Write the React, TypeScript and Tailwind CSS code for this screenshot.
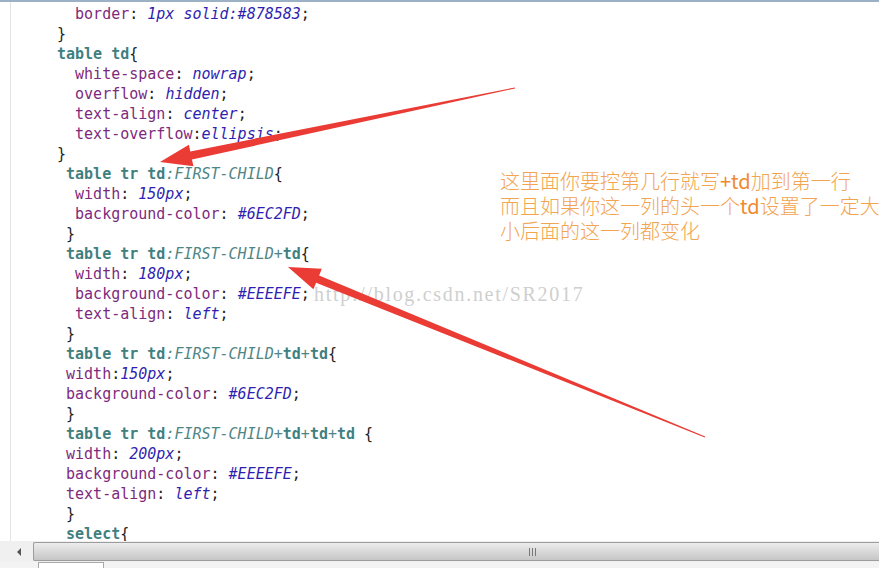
import React from "react";

type Tok = [string, string];

// s = selector, p = pseudo, k = property, v = value, t = plain
const LINES: Tok[][] = [
  [["t", "  "], ["k", "border"], ["t", ": "], ["v", "1px solid:#878583"], ["t", ";"]],
  [["t", "}"]],
  [["s", "table td"], ["t", "{"]],
  [["t", "  "], ["k", "white-space"], ["t", ": "], ["v", "nowrap"], ["t", ";"]],
  [["t", "  "], ["k", "overflow"], ["t", ": "], ["v", "hidden"], ["t", ";"]],
  [["t", "  "], ["k", "text-align"], ["t", ": "], ["v", "center"], ["t", ";"]],
  [["t", "  "], ["k", "text-overflow"], ["t", ":"], ["v", "ellipsis"], ["t", ";"]],
  [["t", "}"]],
  [["t", " "], ["s", "table tr td"], ["p", ":FIRST-CHILD"], ["t", "{"]],
  [["t", "  "], ["k", "width"], ["t", ": "], ["v", "150px"], ["t", ";"]],
  [["t", "  "], ["k", "background-color"], ["t", ": "], ["v", "#6EC2FD"], ["t", ";"]],
  [["t", " }"]],
  [["t", " "], ["s", "table tr td"], ["p", ":FIRST-CHILD+"], ["s", "td"], ["t", "{"]],
  [["t", "  "], ["k", "width"], ["t", ": "], ["v", "180px"], ["t", ";"]],
  [["t", "  "], ["k", "background-color"], ["t", ": "], ["v", "#EEEEFE"], ["t", ";"]],
  [["t", "  "], ["k", "text-align"], ["t", ": "], ["v", "left"], ["t", ";"]],
  [["t", " }"]],
  [["t", " "], ["s", "table tr td"], ["p", ":FIRST-CHILD+"], ["s", "td"], ["p", "+"], ["s", "td"], ["t", "{"]],
  [["t", " "], ["k", "width"], ["t", ":"], ["v", "150px"], ["t", ";"]],
  [["t", " "], ["k", "background-color"], ["t", ": "], ["v", "#6EC2FD"], ["t", ";"]],
  [["t", " }"]],
  [["t", " "], ["s", "table tr td"], ["p", ":FIRST-CHILD+"], ["s", "td"], ["p", "+"], ["s", "td"], ["p", "+"], ["s", "td"], ["t", " {"]],
  [["t", " "], ["k", "width"], ["t", ": "], ["v", "200px"], ["t", ";"]],
  [["t", " "], ["k", "background-color"], ["t", ": "], ["v", "#EEEEFE"], ["t", ";"]],
  [["t", " "], ["k", "text-align"], ["t", ": "], ["v", "left"], ["t", ";"]],
  [["t", " }"]],
  [["t", " "], ["s", "select"], ["t", "{"]],
];

const TOK_CLASS: Record<string, string> = {
  s: "font-bold text-[#3f7f7f]",
  p: "italic text-[#4f8585]",
  k: "text-[#7d2a7d]",
  v: "italic text-[#2f1fb0]",
  t: "text-[#222]",
};

export default function App() {
  return (
    <div className="relative w-[879px] h-[568px] overflow-hidden bg-white flex flex-col">
      <div className="h-[2px] bg-[#9db1c5]" />

      <div className="flex-1 flex min-h-0 overflow-hidden">
        <div className="w-[11px] shrink-0 border-r border-[#e4e4e4]" />
        <div className="pl-[46px] pt-[2px] font-['DejaVu_Sans_Mono',monospace] text-[15px]">
          {LINES.map((line, i) => (
            <div key={i} className="h-[20px] leading-[20px] whitespace-pre">
              {line.map(([k, text], j) => (
                <span key={j} className={TOK_CLASS[k]}>{text}</span>
              ))}
            </div>
          ))}
        </div>
      </div>

      {/* horizontal scrollbar */}
      <div className="h-[21px] shrink-0 flex bg-[#f0f0f0]">
        <div className="w-[33px] flex items-center justify-center">
          <span className="w-0 h-0 border-y-[4px] border-y-transparent border-r-[4px] border-r-[#555] ml-[4px]" />
        </div>
        <div className="flex-1 my-[1px] border border-r-0 border-[#9c9c9c] rounded-l-[2px] bg-gradient-to-b from-[#ededed] via-[#d9d9d9] to-[#c6c6c6] flex items-center pl-[495px]">
          <div className="flex gap-[2px]">
            <span className="w-[1px] h-[8px] bg-[#777]" />
            <span className="w-[1px] h-[8px] bg-[#777]" />
            <span className="w-[1px] h-[8px] bg-[#777]" />
          </div>
        </div>
      </div>

      {/* bottom tab strip */}
      <div className="h-[6px] shrink-0 bg-[#f3f3f3] flex">
        <div className="ml-[38px] w-[66px] bg-white border-x border-t border-[#a9a9a9]" />
      </div>

      {/* annotation note */}
      <div className="absolute left-[500px] top-[169px] flex flex-col gap-[1px] text-[20px] leading-[24px] text-[#f2a450] font-['Noto_Sans_CJK_SC',sans-serif] font-light whitespace-nowrap">
        <div>这里面你要控第几行就写<span className="text-[#f08a2e] font-normal">+td</span>加到第一行</div>
        <div>而且如果你这一列的头一个<span className="text-[#f08a2e] font-normal">td</span>设置了一定大</div>
        <div>小后面的这一列都变化</div>
      </div>

      {/* watermark */}
      <div className="absolute left-[314px] top-[282px] text-[20px] leading-[24px] tracking-[1.7px] text-[#cfcfcf] font-['Liberation_Serif',serif] whitespace-nowrap">
        http://blog.csdn.net/SR2017
      </div>

      {/* arrows */}
      <svg className="absolute inset-0 pointer-events-none" width="879" height="568" viewBox="0 0 879 568">
        <polygon
          fill="#ea3b35"
          points="514.9,87.5 190.3,151.4 188.9,144.7 160,162 193.5,166.2 191.9,159.5 515.1,88.5"
        />
        <polygon
          fill="#ea3b35"
          points="705.2,436.5 319.1,275.4 321.8,268.8 288,267 313.4,289.3 316.1,282.7 704.8,437.5"
        />
      </svg>
    </div>
  );
}
